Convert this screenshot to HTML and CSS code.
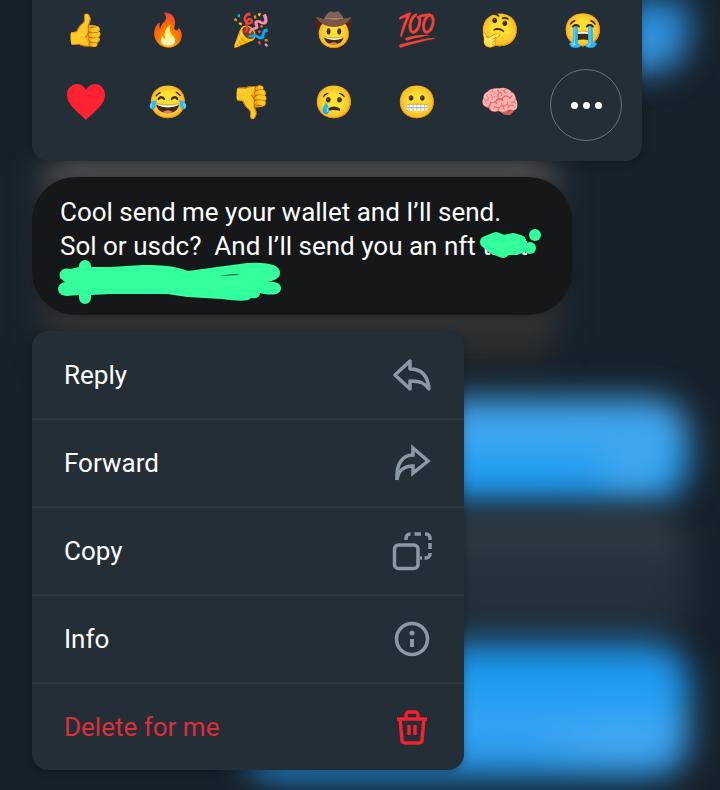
FILE: index.html
```
<!DOCTYPE html>
<html lang="en">
<head>
    <meta charset="UTF-8">
    <meta name="viewport" content="width=device-width, initial-scale=1.0">
    <title>Message options</title>
    <link rel="stylesheet" href="styles.css">
</head>
<body>
    <!-- Blurred conversation behind the overlay -->
    <div class="chat-backdrop" aria-hidden="true">
        <div class="blur-bubble sent first"></div>
        <div class="blur-bubble received"></div>
        <div class="blur-bubble sent second"></div>
        <div class="blur-bubble meta"></div>
        <div class="blur-bubble sent third"></div>
    </div>

    <main class="overlay">
        <div class="reactions">
            <button class="emoji">👍</button>
            <button class="emoji">🔥</button>
            <button class="emoji">🎉</button>
            <button class="emoji">🤠</button>
            <button class="emoji">💯</button>
            <button class="emoji">🤔</button>
            <button class="emoji">😭</button>
            <button class="emoji heart" aria-label="Heart">
                <svg viewBox="0 0 38 36"><path d="M19 36C15 31 0 22 0 11 0 4 5 0 10 0 14 0 17 2 19 6 21 2 24 0 28 0 33 0 38 4 38 11 38 22 23 31 19 36Z"/></svg>
            </button>
            <button class="emoji">😂</button>
            <button class="emoji">👎</button>
            <button class="emoji">😢</button>
            <button class="emoji">😬</button>
            <button class="emoji">🧠</button>
            <button class="more-btn" aria-label="More reactions">
                <span class="dot"></span>
                <span class="dot"></span>
                <span class="dot"></span>
            </button>
        </div>

        <div class="message">
            <p class="message-text">Cool send me your wallet and I’ll send.<br>Sol or usdc?&nbsp; And I’ll send you an nft that</p>
            <svg class="scribble" viewBox="0 0 540 138" aria-hidden="true">
                <path class="scribble-line" d="M454 65 464 61 472 64 481 62 488 64 490 70 483 72 475 72 471 75 461 71Z"/>
                <circle cx="498" cy="71" r="6"/>
                <circle cx="503" cy="58" r="6"/>
                <path d="M38 92 47 90V89a6 6 0 0 1 12 0v1L78 90 111 88Q140 87 156 94L185 90 215 86Q248 84 248 96C248 101 243 104 233 105 245 104 249 107 249 111 249 118 240 119 228 116 228 121 223 122 219 121 216 125 205 124 190 122L155 120 135 117H78L59 118v3a6 6 0 0 1-12 0v-3L35 119C24 119 23 107 33 105L28 101C26 94 32 90 38 92Z"/>
                <path class="scribble-gap" d="M188 99Q202 96 208 98Q200 98 188 99Z"/>
            </svg>
        </div>

        <div class="menu">
            <button class="menu-item">
                <span>Reply</span>
                <svg class="icon" viewBox="0 0 40 40"><path d="M3 20 18 6V14C30 14 36 21 37 34 33 28 28 26 18 26V34Z"/></svg>
            </button>
            <button class="menu-item">
                <span>Forward</span>
                <svg class="icon miter" viewBox="0 0 40 40"><path d="M5 37C4 20 11 12 21 12V5L36 18 21 30V23C12 23 6 28 5 37"/></svg>
            </button>
            <button class="menu-item">
                <span>Copy</span>
                <svg class="icon" viewBox="0 0 40 40">
                    <rect x="2.5" y="14" width="23.5" height="23.5" rx="4"/>
                    <path d="M14 9V7a4 4 0 0 1 4-4h.5M22.5 3h6.5M33 3h1a4 4 0 0 1 4 4V9M38 12v6M38 22v1a4 4 0 0 1-4 4h-1.5M30 27h-2"/>
                </svg>
            </button>
            <button class="menu-item">
                <span>Info</span>
                <svg class="icon" viewBox="0 0 40 40">
                    <circle cx="20" cy="20" r="15.5"/>
                    <circle class="solid" cx="20" cy="14" r="2.5"/>
                    <rect class="solid" x="18" y="20" width="4" height="8"/>
                </svg>
            </button>
            <button class="menu-item delete">
                <span>Delete for me</span>
                <svg class="icon" viewBox="0 0 40 40">
                    <path d="M5 12H35M14 12V8a3 3 0 0 1 3-3h6a3 3 0 0 1 3 3v4M8 12 10 33a3 3 0 0 0 3 3H27a3 3 0 0 0 3-3L32 12M17 18v10M23 18v10"/>
                </svg>
            </button>
        </div>
    </main>
</body>
</html>
```
FILE: styles.css
```
* {
    margin: 0;
    padding: 0;
    box-sizing: border-box;
}

body {
    font-family: Roboto, 'Noto Color Emoji', sans-serif;
    background: #16212a;
    color: #ffffff;
    min-height: 100vh;
    position: relative;
    overflow: hidden;
}

button {
    background: none;
    border: none;
    color: inherit;
    font-family: inherit;
    cursor: pointer;
}

/* Blurred chat */
.chat-backdrop {
    position: absolute;
    inset: 0;
    display: flex;
    flex-direction: column;
    padding: 0 32px;
    overflow: hidden;
}

.blur-bubble {
    flex-shrink: 0;
    border-radius: 36px;
    filter: blur(16px);
}

.sent {
    align-self: flex-end;
    width: 68%;
}

.first {
    height: 72px;
    border-radius: 0 0 36px 36px;
    background: linear-gradient(#2388d4, #3a9be6);
}

.received {
    width: 78%;
    height: 230px;
    margin-top: 68px;
    margin-left: 12px;
    background: linear-gradient(#4c4c4e, #3c3d3e 65%, #222425);
}

.second {
    height: 104px;
    margin-top: 28px;
    background:
        radial-gradient(circle at 88% 70%, #4aabf0, transparent 50px),
        linear-gradient(#3d9fe8, #41a8f0 35%, #1d9bf0 75%, #2095e8);
}

.meta {
    align-self: flex-end;
    width: 50%;
    height: 130px;
    margin-top: 12px;
    background: linear-gradient(#3a4249, #26313b 40%, #22303c);
}

.third {
    height: 134px;
    background:
        radial-gradient(ellipse at 85% 75%, #4fadf2, transparent 100px),
        linear-gradient(#1d93e6, #1d9bf0 30%, #38a5f5 60%, #2090e0);
}

/* Foreground */
.overlay {
    position: relative;
    display: flex;
    flex-direction: column;
    align-items: flex-start;
    gap: 16px;
    padding: 0 32px 20px;
}

.reactions {
    align-self: stretch;
    display: grid;
    grid-template-columns: repeat(7, 1fr);
    grid-auto-rows: 72px;
    margin-top: -3px;
    margin-right: 46px;
    padding: 0 17px 20px 12px;
    background: #242e36;
    border-radius: 0 0 16px 16px;
    box-shadow: 0 2px 8px rgba(0, 0, 0, 0.25);
}

.emoji {
    height: 66px;
    font-size: 32px;
    line-height: 66px;
}

.heart {
    display: flex;
    align-items: center;
    justify-content: center;
}

.heart svg {
    width: 38px;
    height: 36px;
    fill: #ff2233;
}

.more-btn {
    justify-self: end;
    width: 72px;
    height: 72px;
    margin-right: 3px;
    display: flex;
    align-items: center;
    justify-content: center;
    gap: 5px;
    border: 1px solid #6b737a;
    border-radius: 50%;
}

.dot {
    width: 7px;
    height: 7px;
    border-radius: 50%;
    background: #ffffff;
}

.message {
    position: relative;
    width: 540px;
    max-width: 100%;
    min-height: 138px;
    padding: 18px 28px;
    background: #151719;
    border-radius: 44px;
    box-shadow: 0 2px 8px rgba(0, 0, 0, 0.25);
}

.message-text {
    font-size: 26px;
    line-height: 34px;
}

.scribble {
    position: absolute;
    top: 0;
    left: 0;
    width: 540px;
    height: 138px;
    fill: #33ff9c;
}

.scribble-line {
    stroke: #33ff9c;
    stroke-width: 12;
    stroke-linecap: round;
    stroke-linejoin: round;
}

.scribble-gap {
    fill: #151719;
}

.menu {
    width: 432px;
    max-width: 100%;
    padding-top: 1px;
    background: #242e36;
    border-radius: 16px;
    box-shadow: 0 2px 10px rgba(0, 0, 0, 0.3);
}

.menu-item {
    width: 100%;
    height: 88px;
    display: flex;
    align-items: center;
    justify-content: space-between;
    padding: 0 32px;
    border-bottom: 2px solid #2f3941;
    font-size: 26px;
    line-height: 34px;
}

.menu-item:last-child {
    height: 86px;
    border-bottom: none;
}

.icon {
    width: 40px;
    height: 40px;
    fill: none;
    stroke: #8b98a5;
    stroke-width: 3.5;
    stroke-linejoin: round;
}

.icon.miter {
    stroke-linejoin: miter;
}

.icon .solid {
    fill: #8b98a5;
    stroke: none;
}

.delete {
    color: #dc2f3c;
}

.delete .icon {
    stroke: #f4212e;
}
```
